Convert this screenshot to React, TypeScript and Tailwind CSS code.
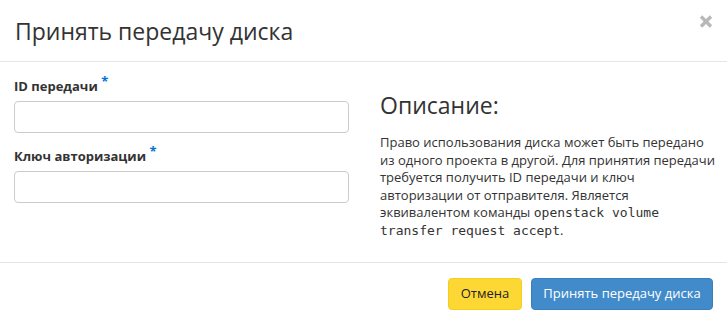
import React from "react";

export default function App() {
  return (
    <div className="w-[727px] h-[324px] bg-white text-[#333] overflow-hidden" style={{ fontFamily: '"Open Sans", "Noto Sans", sans-serif' }}>
      <div className="h-[62px] border-b border-[#e5e5e5] flex items-center justify-between pl-[15px] pr-[14px]">
        <h1 className="text-[23px] leading-none text-[#333] pt-[1px]">Принять передачу диска</h1>
        <button className="self-start mt-[15px]">
          <svg width="14" height="13" viewBox="0 0 14 13"><path d="M2 1.5 L12 11.5 M12 1.5 L2 11.5" stroke="#b8b8b8" strokeWidth="3.4" /></svg>
        </button>
      </div>
      <div className="flex px-[14px] pt-[15px] h-[201px] border-b border-[#e5e5e5]">
        <div className="w-[335px] shrink-0">
          <label className="block text-[13px] font-bold leading-[18px] text-[#333]">
            ID передачи <span className="text-[#0073d4] relative -top-[5px]">*</span>
          </label>
          <input className="mt-[6px] block w-[335px] h-[32px] border border-[#ccc] rounded-[4px]" />
          <label className="block text-[13px] font-bold leading-[18px] text-[#333] mt-[14px]">
            Ключ авторизации <span className="text-[#0073d4] relative -top-[5px]">*</span>
          </label>
          <input className="mt-[6px] block w-[335px] h-[32px] border border-[#ccc] rounded-[4px]" />
        </div>
        <div className="ml-[31px] w-[340px] shrink-0">
          <h3 className="text-[23px] leading-[30px] text-[#333] mt-[13px]">Описание:</h3>
          <p className="text-[13px] leading-[17.5px] text-[#333] mt-[14px]">
            Право использования диска может быть передано из одного проекта в другой. Для принятия передачи требуется получить ID передачи и ключ авторизации от отправителя. Является эквивалентом команды{" "}
            <code style={{ fontFamily: '"DejaVu Sans Mono", monospace' }} className="text-[13px] leading-[17.5px] text-[#333]">openstack volume transfer request accept</code>.
          </p>
        </div>
      </div>
      <div className="flex justify-end gap-[9px] pr-[14px] pt-[15px]">
        <button className="h-[32px] w-[74px] rounded-[4px] bg-[#fdd835] border border-[#f5cd1d] text-[13px] text-[#222]">Отмена</button>
        <button className="h-[32px] w-[182px] rounded-[4px] bg-[#428bca] border border-[#3a7fbd] text-[13px] text-white">Принять передачу диска</button>
      </div>
    </div>
  );
}
